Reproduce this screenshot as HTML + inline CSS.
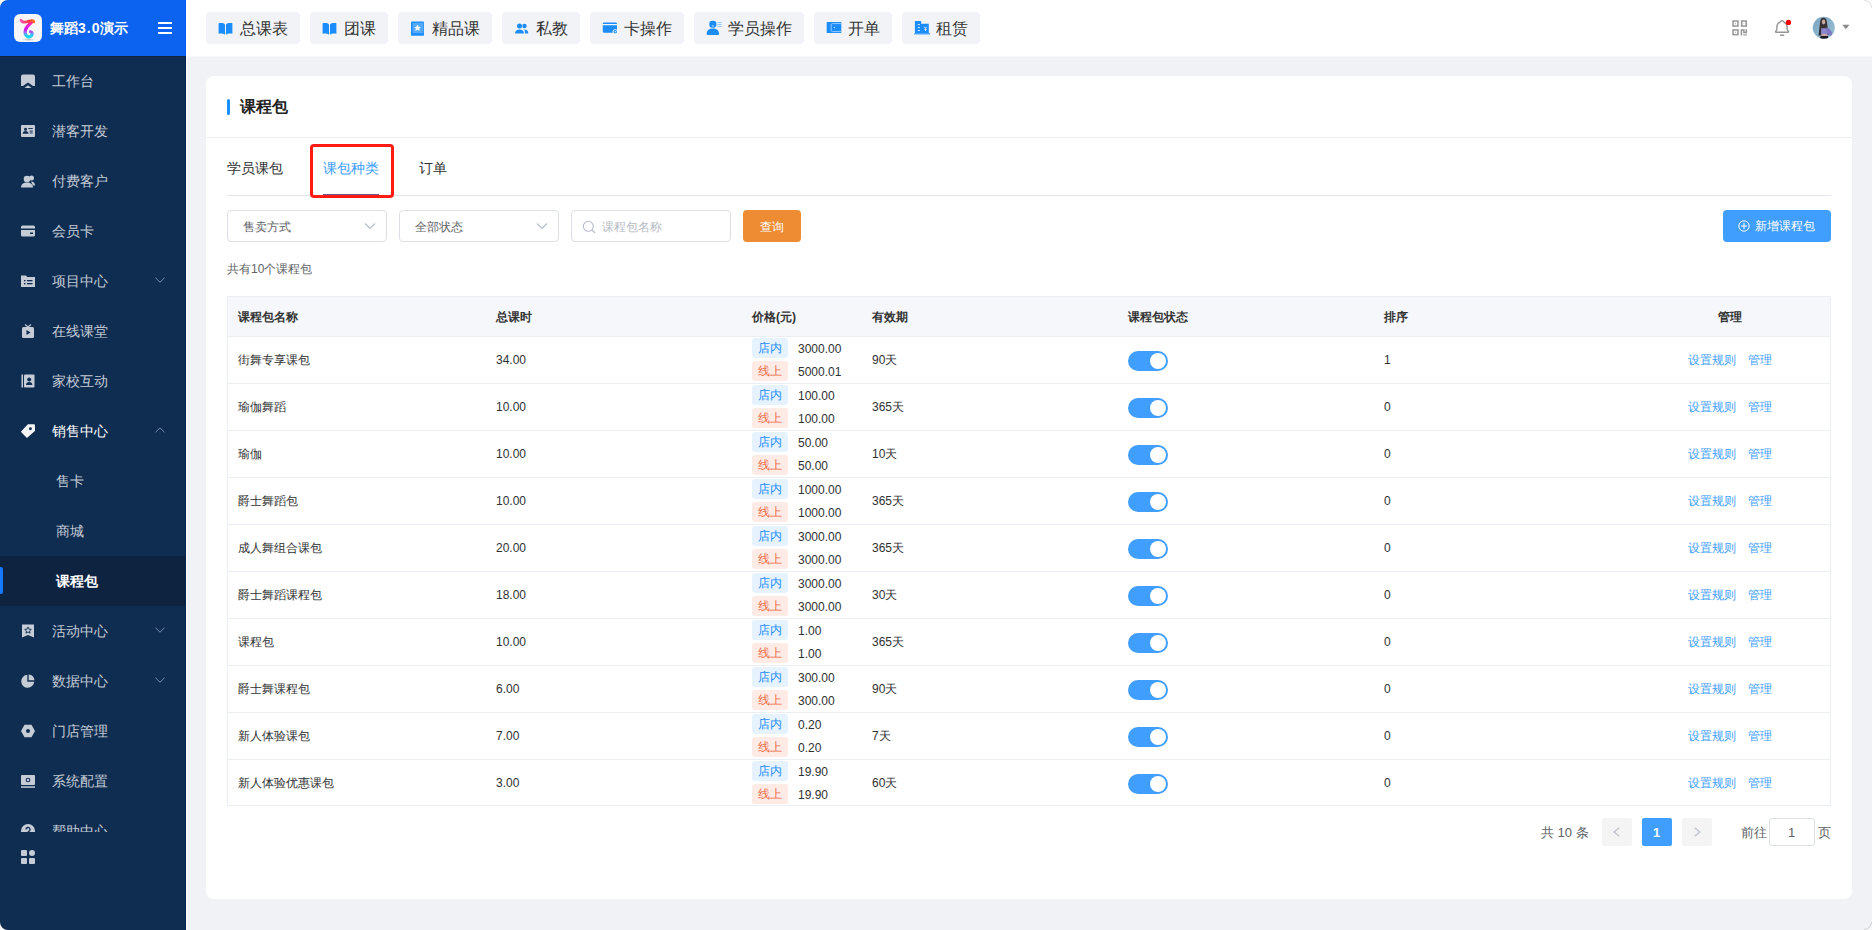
<!DOCTYPE html>
<html><head><meta charset="utf-8">
<style>
*{box-sizing:border-box;margin:0;padding:0}
html,body{width:1872px;height:930px;overflow:hidden;background:#fff;font-family:"Liberation Sans",sans-serif}
.app{position:absolute;left:0;top:0;width:1872px;height:930px;overflow:hidden;background:#f0f2f5}
.side{position:absolute;left:0;top:0;width:186px;height:930px;background:#0f2d51}
.sidehead{position:absolute;left:0;top:0;width:186px;height:56px;background:#0b63ef}
.logo{position:absolute;left:14px;top:14px;width:28px;height:28px;border-radius:6px;background:#f7f7f7}
.brand{position:absolute;left:50px;top:18px;font-size:14px;font-weight:bold;color:#fff;line-height:20px;white-space:nowrap}
.ham{position:absolute;left:158px;top:22px;width:14px;height:12px}
.ham i{position:absolute;left:0;width:14px;height:2px;background:#fff}
.menu{position:absolute;left:0;top:56px;width:186px;height:776px;overflow:hidden}
.mi{position:absolute;left:0;width:186px;height:50px}
.mi svg.ic{position:absolute;left:21px;top:18px;width:14px;height:14px}
.mi .t{position:absolute;left:52px;top:15px;font-size:14px;line-height:20px;color:#c5ccd6;white-space:nowrap}
.mi .t.sub{left:56px}
.mi svg.chev{position:absolute;left:155px;top:20.5px;width:10px;height:6px}
.mi.act{background:#0d2340}
.mi.act .t{color:#fff;font-weight:bold}
.mi.open .t{color:#fff}
.ind{position:absolute;left:0;top:11px;width:3px;height:27px;background:#1677ff;border-radius:0 2px 2px 0}
.grid{position:absolute;left:21px;top:850px;width:14px;height:14px}
.top{position:absolute;left:186px;top:0;width:1686px;height:56px;background:#fff}
.nb{position:absolute;top:12px;height:32px;background:#f2f3f7;border-radius:4px}
.nb svg{position:absolute;left:12px;top:9px;width:15px;height:15px;overflow:visible}
.nb span{position:absolute;left:34px;top:7px;font-size:16px;line-height:20px;color:#333;white-space:nowrap}
.card{position:absolute;left:206px;top:76px;width:1646px;height:823px;background:#fff;border-radius:8px}
.abs{position:absolute;white-space:nowrap}

.ttl{position:absolute;left:240px;top:96px;font-size:16px;font-weight:bold;line-height:22px;color:#222}
.bar{position:absolute;left:227px;top:99px;width:3px;height:16px;border-radius:2px;background:#1890ff}
.hline{position:absolute;height:1px;background:#ebeef5}
.tab{position:absolute;top:158px;font-size:14px;line-height:20px;color:#303133;white-space:nowrap}
.tab.on{color:#409eff}
.redbox{position:absolute;left:310px;top:144px;width:84px;height:54px;border:3px solid #ff1a12;border-radius:4px}
.sel{position:absolute;top:210px;height:32px;border:1px solid #dcdfe6;border-radius:4px;background:#fff}
.sel .tx{position:absolute;left:15px;top:8px;font-size:12px;line-height:16px;color:#606266;white-space:nowrap}
.sel svg{position:absolute;right:10px;top:9px;width:12px;height:12px}
.btn{position:absolute;top:210px;height:32px;border-radius:4px;color:#fff;font-size:12px;line-height:16px}
.cnt{position:absolute;left:227px;top:261px;font-size:12px;line-height:16px;color:#606266;white-space:nowrap}
.tbl{position:absolute;left:227px;top:296px;width:1604px;height:510px;border:1px solid #ebeef5;border-bottom:none}
.th{position:absolute;left:0;top:0;width:1602px;height:40px;background:#f5f7fa;border-bottom:1px solid #ebeef5}
.c{position:absolute;font-size:12px;line-height:16px;color:#303133;white-space:nowrap}
.th .c{font-weight:bold;top:12px;color:#333}
.tr{position:absolute;left:0;width:1602px;height:47px;border-bottom:1px solid #ebeef5}
.tr .c{top:15px}
.tg{position:absolute;left:524px;width:36px;height:20px;border-radius:3px;font-size:12px;line-height:20px;text-align:center}
.tg.a{top:1px;background:#e6f3ff;color:#1c8cff}
.tg.b{top:24px;background:#feebe6;color:#ee6a44}
.pr{position:absolute;left:570px;font-size:12px;line-height:16px;color:#303133}
.sw{position:absolute;left:900px;top:14px;width:40px;height:20px;border-radius:10px;background:#409eff}
.sw i{position:absolute;right:2px;top:2px;width:16px;height:16px;border-radius:50%;background:#fff}
.lk{position:absolute;top:15px;font-size:12px;line-height:16px;color:#409eff;white-space:nowrap}
.pg{position:absolute;top:818px;height:28px;width:30px;border-radius:2px;background:#f4f4f5}
.pgt{position:absolute;font-size:13px;line-height:16px;color:#606266;white-space:nowrap}
</style></head><body>
<div class="app">
<div class="side">
 <div class="sidehead">
  <div class="logo"><svg width="28" height="28" viewBox="0 0 28 28">
<defs>
<linearGradient id="lg1" x1="0" y1="0" x2="1" y2="0"><stop offset="0" stop-color="#ff4fb0"/><stop offset="0.6" stop-color="#ff3a3a"/><stop offset="1" stop-color="#ff6a20"/></linearGradient>
<linearGradient id="lg2" x1="0" y1="0" x2="0" y2="1"><stop offset="0" stop-color="#ff2a6a"/><stop offset="0.25" stop-color="#f020d0"/><stop offset="0.5" stop-color="#d010f0"/><stop offset="0.72" stop-color="#9a6af0"/><stop offset="0.88" stop-color="#30c8f0"/><stop offset="1" stop-color="#18d8f0"/></linearGradient>
<radialGradient id="sh" cx="0.5" cy="0.5" r="0.5"><stop offset="0" stop-color="#000" stop-opacity="0.22"/><stop offset="1" stop-color="#000" stop-opacity="0"/></radialGradient>
</defs>
<ellipse cx="14.5" cy="25.5" rx="7" ry="1.6" fill="url(#sh)"/><g transform="translate(14 14.5) scale(0.9) translate(-14 -14.5)">
<path d="M18.5 6.8 C 16 10.5, 10.8 12, 10.8 19 C 10.8 23.5, 15.5 25, 17.8 22.5 C 19.2 21, 18.8 18.5, 16.8 18.2" fill="none" stroke="url(#lg2)" stroke-width="3.6" stroke-linecap="round"/>
<path d="M6.2 5.2 C 7.5 8.2, 12 7.6, 15.5 6.2 C 18 5.3, 20.5 5.2, 20.5 7.2" fill="none" stroke="url(#lg1)" stroke-width="3" stroke-linecap="round"/></g>
</svg></div>
  <div class="brand">舞蹈<span style="letter-spacing:1px">3.0</span>演示</div>
  <div class="ham"><i style="top:0"></i><i style="top:5px"></i><i style="top:10px"></i></div>
 </div>
 <div class="menu">
<div class="mi" style="top:0px"><svg class="ic" viewBox="0 0 14 14"><path d="M2 0.5h10a2 2 0 0 1 2 2v9.5l-2 0L7 8.5 2 12 0 12V2.5a2 2 0 0 1 2-2z" fill="#c5ccd6"/><path d="M3.5 14L7 11.2 10.5 14z" fill="#c5ccd6"/></svg><div class="t">工作台</div></div>
<div class="mi" style="top:50px"><svg class="ic" viewBox="0 0 14 14"><rect x="0" y="1" width="14" height="12" rx="1" fill="#c5ccd6"/><circle cx="4.5" cy="5.2" r="1.5" fill="#0f2d51"/><path d="M1.7 9.8C1.7 7.8 3 6.9 4.55 6.9S7.4 7.8 7.4 9.8Z" fill="#0f2d51"/><rect x="7.2" y="4" width="4.6" height="0.9" fill="#0f2d51"/><rect x="8.6" y="6.2" width="3.1" height="3.5" fill="#5f7593"/></svg><div class="t">潜客开发</div></div>
<div class="mi" style="top:100px"><svg class="ic" viewBox="0 0 14 14"><circle cx="6" cy="5" r="3.3" fill="#c5ccd6"/><path d="M0 13.5c0-3.5 2.5-5 6-5s6 1.5 6 5z" fill="#c5ccd6"/><circle cx="10.5" cy="4" r="2.5" fill="#c5ccd6"/><path d="M10 7.5c2.5 0 4 1.2 4 4h-2z" fill="#c5ccd6"/></svg><div class="t">付费客户</div></div>
<div class="mi" style="top:150px"><svg class="ic" viewBox="0 0 14 14"><rect x="0" y="1.5" width="14" height="11" rx="1.5" fill="#c5ccd6"/><rect x="0" y="4.5" width="14" height="1.5" fill="#0f2d51"/><rect x="9" y="8.5" width="3" height="1.5" fill="#0f2d51"/></svg><div class="t">会员卡</div></div>
<div class="mi" style="top:200px"><svg class="ic" viewBox="0 0 14 14"><path d="M0 1.5h5l1.2 1.5H14v10H0z" fill="#c5ccd6"/><rect x="3" y="6" width="1.5" height="1.3" fill="#0f2d51"/><rect x="6" y="6" width="5.5" height="1.3" fill="#0f2d51"/><rect x="3" y="9" width="1.5" height="1.3" fill="#0f2d51"/><rect x="6" y="9" width="5.5" height="1.3" fill="#0f2d51"/></svg><div class="t">项目中心</div><svg class="chev" viewBox="0 0 10 6"><path d="M0.5 0.8 L5 5.2 L9.5 0.8" fill="none" stroke="#7890ad" stroke-width="1"/></svg></div>
<div class="mi" style="top:250px"><svg class="ic" viewBox="0 0 14 14"><path d="M4 0.5L7 3 10 0.5" stroke="#c5ccd6" stroke-width="1.2" fill="none"/><rect x="1" y="3" width="12" height="11" rx="1.5" fill="#c5ccd6"/><path d="M5.5 6v5l4-2.5z" fill="#0f2d51"/></svg><div class="t">在线课堂</div></div>
<div class="mi" style="top:300px"><svg class="ic" viewBox="0 0 14 14"><rect x="0.5" y="0.5" width="1.5" height="13" fill="#c5ccd6"/><rect x="3" y="0.5" width="10.5" height="13" rx="1" fill="#c5ccd6"/><circle cx="8.2" cy="5.5" r="2" fill="#0f2d51"/><path d="M5 11c0-2 1.4-3 3.2-3s3.2 1 3.2 3z" fill="#0f2d51"/></svg><div class="t">家校互动</div></div>
<div class="mi open" style="top:350px"><svg class="ic" viewBox="0 0 14 14"><path d="M7.2 1.1H13.1L13.3 6.3 6 13 0.9 7.8z" fill="#f4f4f4" stroke="#f4f4f4" stroke-width="1.6" stroke-linejoin="round"/><circle cx="9.4" cy="4.7" r="1.45" fill="#0f2d51"/></svg><div class="t">销售中心</div><svg class="chev" viewBox="0 0 10 6"><path d="M0.5 5.2 L5 0.8 L9.5 5.2" fill="none" stroke="#7890ad" stroke-width="1"/></svg></div>
<div class="mi" style="top:400px"><div class="t sub">售卡</div></div>
<div class="mi" style="top:450px"><div class="t sub">商城</div></div>
<div class="mi act" style="top:500px"><div class="ind"></div><div class="t sub">课程包</div></div>
<div class="mi" style="top:550px"><svg class="ic" viewBox="0 0 14 14"><path d="M1 0.5h12v13L7 11 1 13.5z" fill="#c5ccd6"/><path d="M7 3l1 2.2 2.3 0.2-1.8 1.5 0.6 2.3L7 8 4.9 9.2l0.6-2.3-1.8-1.5 2.3-0.2z" fill="none" stroke="#0f2d51" stroke-width="0.9"/></svg><div class="t">活动中心</div><svg class="chev" viewBox="0 0 10 6"><path d="M0.5 0.8 L5 5.2 L9.5 0.8" fill="none" stroke="#7890ad" stroke-width="1"/></svg></div>
<div class="mi" style="top:600px"><svg class="ic" viewBox="0 0 14 14"><path d="M6.3 0.8A6.5 6.5 0 1 0 13.2 7.7H6.3z" fill="#c5ccd6"/><path d="M7.7 0.5A6.5 6.5 0 0 1 13.5 6.3H7.7z" fill="#c5ccd6"/></svg><div class="t">数据中心</div><svg class="chev" viewBox="0 0 10 6"><path d="M0.5 0.8 L5 5.2 L9.5 0.8" fill="none" stroke="#7890ad" stroke-width="1"/></svg></div>
<div class="mi" style="top:650px"><svg class="ic" viewBox="0 0 14 14"><path d="M3.5 0.8h7L14 7l-3.5 6.2h-7L0 7z" fill="#c5ccd6"/><circle cx="7" cy="7" r="2" fill="#0f2d51"/></svg><div class="t">门店管理</div></div>
<div class="mi" style="top:700px"><svg class="ic" viewBox="0 0 14 14"><rect x="0" y="1" width="14" height="10" rx="1" fill="#c5ccd6"/><rect x="0" y="12.3" width="14" height="1.5" fill="#c5ccd6"/><circle cx="7" cy="6" r="1.8" fill="none" stroke="#0f2d51" stroke-width="1.1"/></svg><div class="t">系统配置</div></div>
<div class="mi" style="top:750px"><svg class="ic" viewBox="0 0 14 14"><circle cx="7" cy="7" r="7" fill="#c5ccd6"/><path d="M5 5.5a2 2 0 1 1 2.8 1.8c-0.6 0.3-0.8 0.6-0.8 1.3" stroke="#0f2d51" stroke-width="1.3" fill="none"/></svg><div class="t">帮助中心</div></div>
 </div>
 <svg class="grid" viewBox="0 0 14 14" fill="#c5ccd6"><rect x="0" y="0" width="6" height="6" rx="1"/><circle cx="11" cy="3" r="3"/><rect x="0" y="8" width="6" height="6" rx="1"/><rect x="8" y="8" width="6" height="6" rx="1"/></svg>
</div>
<div class="top">
<div class="nb" style="left:20px;width:94px"><svg viewBox="0 0 15 15"><path d="M7 3.4C5.5 1.9 3 1.6 0.6 2.3V12.8C3 12.2 5.5 12.5 7 13.8Z" fill="#1a8dfa"/><path d="M8 3.4C9.5 1.9 12 1.6 14.4 2.3V12.8C12 12.2 9.5 12.5 8 13.8Z" fill="#1a8dfa"/></svg><span>总课表</span></div>
<div class="nb" style="left:124px;width:78px"><svg viewBox="0 0 15 15"><path d="M7 3.4C5.5 1.9 3 1.6 0.6 2.3V12.8C3 12.2 5.5 12.5 7 13.8Z" fill="#1a8dfa"/><path d="M8 3.4C9.5 1.9 12 1.6 14.4 2.3V12.8C12 12.2 9.5 12.5 8 13.8Z" fill="#1a8dfa"/></svg><span>团课</span></div>
<div class="nb" style="left:212px;width:94px"><svg viewBox="0 0 15 15"><rect x="1" y="0.5" width="13" height="14" rx="1" fill="#1a8dfa"/><rect x="2.5" y="1.8" width="11" height="10.5" fill="#fff" opacity="0.25"/><path d="M7.5 3.5l1.1 2.2 2.4 0.3-1.8 1.6 0.5 2.4-2.2-1.2-2.2 1.2 0.5-2.4-1.8-1.6 2.4-0.3z" fill="#fff"/><rect x="1" y="12.5" width="13" height="2" fill="#1a8dfa"/></svg><span>精品课</span></div>
<div class="nb" style="left:316px;width:78px"><svg viewBox="0 0 15 15"><circle cx="5.5" cy="5" r="2.5" fill="#1a8dfa"/><path d="M1 12.5c0-2.8 2-4 4.5-4s4.5 1.2 4.5 4z" fill="#1a8dfa"/><circle cx="10.5" cy="5" r="2.2" fill="#1a8dfa"/><path d="M10.5 8.5c2.2 0 3.8 1.2 3.8 4H11z" fill="#1a8dfa"/></svg><span>私教</span></div>
<div class="nb" style="left:404px;width:94px"><svg viewBox="0 0 15 15"><path d="M0.8 3.1V2.8A1.3 1.3 0 0 1 2.1 1.6H13.7A1.3 1.3 0 0 1 15 2.8V3.1Z" fill="#1a8dfa"/><path d="M0.8 4.2H15V10.4A1.3 1.3 0 0 1 13.7 11.7H2.1A1.3 1.3 0 0 1 0.8 10.4Z" fill="#1a8dfa"/><circle cx="13.2" cy="10.8" r="2.6" fill="#fff"/><circle cx="13.2" cy="10.8" r="1.8" fill="#1a8dfa"/><circle cx="13.2" cy="10.8" r="0.7" fill="#fff"/></svg><span>卡操作</span></div>
<div class="nb" style="left:508px;width:110px"><svg viewBox="0 0 15 15"><rect x="3.3" y="-0.3" width="7.1" height="7.1" rx="3" fill="#1a8dfa"/><rect x="5.9" y="4.6" width="1.9" height="0.8" fill="#fff"/><path d="M0.7 12.6C0.7 9.3 3.3 7.4 6.85 7.4S13 9.3 13 12.6V13A1 1 0 0 1 12 14H1.7A1 1 0 0 1 0.7 13Z" fill="#1a8dfa"/><path d="M11.3 1.5h4.3M11.3 3.5h4.3M11.3 5.5h4.3" stroke="#8cc6ff" stroke-width="0.9"/></svg><span>学员操作</span></div>
<div class="nb" style="left:628px;width:78px"><svg viewBox="0 0 15 15"><rect x="0.7" y="0.9" width="14.6" height="11.2" rx="0.6" fill="#1a8dfa"/><path d="M15.3 2.6H6.4A1.2 1.2 0 0 0 5.2 3.8V9.4A1.2 1.2 0 0 0 6.4 10.6H15.3" fill="none" stroke="#a6d3ff" stroke-width="0.9"/><circle cx="8.3" cy="6.6" r="0.55" fill="#fff"/></svg><span>开单</span></div>
<div class="nb" style="left:716px;width:78px"><svg viewBox="0 0 15 15"><rect x="0.9" y="0.1" width="6.3" height="12" rx="0.5" fill="#1a8dfa"/><rect x="7" y="2.7" width="7.8" height="9.3" rx="0.4" fill="#1a8dfa"/><rect x="0.2" y="12" width="15.8" height="1.6" rx="0.3" fill="#4aa6ff"/><path d="M3.8 3.6h2M3.8 6.6h2M3.8 9.6h2" stroke="#fff" stroke-width="0.9"/><path d="M10.3 5.8l1.2 1.6 1.2-1.6M11.5 7.4v2.6M10.4 8.4h2.2" stroke="#fff" stroke-width="0.8" fill="none"/></svg><span>租赁</span></div>
</div>
<div class="abs" style="left:185px;top:0;width:1px;height:56px;background:#0057f5"></div><div class="abs" style="left:185px;top:56px;width:1px;height:874px;background:#00214a"></div><div class="abs" style="left:186px;top:56px;width:1px;height:874px;background:#fff"></div><div class="abs" style="left:187px;top:56px;width:1685px;height:1px;background:#f6f7f9"></div><div class="abs" style="left:0;top:56px;width:185px;height:1px;background:#0f2540"></div>

<svg class="abs" style="left:1728px;top:16px;width:24px;height:24px" viewBox="0 0 24 24" fill="none" stroke="#959595" stroke-width="1.5"><rect x="5.05" y="5.05" width="4.9" height="5"/><rect x="13.65" y="5.05" width="4.6" height="5"/><rect x="5.05" y="13.95" width="4.9" height="4.7"/><path d="M13.4 19.4V13.95H15.9V16.6H18.3V13.2"/><path d="M15.2 18.9H19" stroke-width="1.1"/><rect x="7.1" y="7" width="0.9" height="1.3" fill="#aaa" stroke="none"/><rect x="15.4" y="7.2" width="1.1" height="0.9" fill="#c5c5c5" stroke="none"/><rect x="7.1" y="15.7" width="0.9" height="1.2" fill="#aaa" stroke="none"/></svg>
<svg class="abs" style="left:1770px;top:14px;width:30px;height:26px" viewBox="0 0 30 26" fill="none" stroke="#969696" stroke-width="1.4"><path d="M12 6.6C10.9 6.6 10.6 7.6 10.1 8.1C8.1 9.1 6.9 10.6 6.9 12.6V15.5C6.9 16.5 5.5 17 5.5 17.8C5.5 18.2 5.9 18.3 6.6 18.3H17.5C18.2 18.3 18.6 18.2 18.6 17.8C18.6 17 17.1 16.5 17.1 15.5V12.6C17.1 10.6 16 9.1 14 8.1C13.5 7.6 13.2 6.6 12 6.6Z"/><path d="M10.5 21.3H13.7" stroke-linecap="round"/><circle cx="18.45" cy="8.4" r="2.6" fill="#ff0000" stroke="none"/></svg>
<svg class="abs" style="left:1812px;top:16px;width:24px;height:24px" viewBox="0 0 24 24"><defs><clipPath id="av"><circle cx="11.8" cy="11.8" r="11"/></clipPath><linearGradient id="avbg" x1="0" y1="0" x2="1" y2="1"><stop offset="0" stop-color="#78a4c0"/><stop offset="1" stop-color="#9cc0d6"/></linearGradient></defs>
<g clip-path="url(#av)"><rect width="24" height="24" fill="url(#avbg)"/>
<path d="M8.5 4C9.5 1 13.5 1 14.5 4C15.5 8 15.5 13 17 19L6.5 19.5C7.5 13 7.5 8 8.5 4Z" fill="#3b3234"/>
<ellipse cx="11.6" cy="6" rx="1.7" ry="2.4" fill="#c9a8a2"/>
<path d="M9.2 12.2h5.6l0.6 5.8H9z" fill="#8e88cf"/><path d="M14.3 11.2c3 0.5 5 3 6.2 6.8l-2.2 1.8-1.6-1.2-1.6 1.2z" fill="#7d77c4"/><path d="M8.8 12.5c-1.2 1-1.6 3-1.5 6l1.8 0.5z" fill="#2f2a3a"/>
<path d="M9.5 18h5.5l0.2 2H9.3z" fill="#caa7a2"/><path d="M8.5 20h7.5l0.5 5h-8.5z" fill="#1b1b22"/></g></svg>
<svg class="abs" style="left:1842px;top:24px;width:8px;height:6px" viewBox="0 0 8 6"><path d="M0.3 0.8h7.2L3.9 5.2z" fill="#8a8a8a"/></svg>


<div class="card"></div>
<div class="bar"></div>
<div class="ttl">课程包</div>
<div class="hline" style="left:206px;top:137px;width:1646px"></div>
<div class="tab" style="left:227px">学员课包</div>
<div class="tab on" style="left:323px">课包种类</div>
<div class="tab" style="left:419px">订单</div>
<div class="hline" style="left:227px;top:195px;width:1604px;background:#e4e7ed"></div>
<div class="hline" style="left:323px;top:194px;width:56px;height:1px;background:#6c5a9c"></div>
<div class="redbox"></div>
<div class="sel" style="left:227px;width:160px"><div class="tx">售卖方式</div><svg viewBox="0 0 12 12"><path d="M1 3.5L6 8.5 11 3.5" fill="none" stroke="#b4bccc" stroke-width="1.2"/></svg></div>
<div class="sel" style="left:399px;width:160px"><div class="tx">全部状态</div><svg viewBox="0 0 12 12"><path d="M1 3.5L6 8.5 11 3.5" fill="none" stroke="#b4bccc" stroke-width="1.2"/></svg></div>
<div class="sel" style="left:571px;width:160px"><svg style="left:10px;top:9px;width:14px;height:14px" viewBox="0 0 14 14"><circle cx="6.3" cy="6.3" r="5" fill="none" stroke="#b4bccc" stroke-width="1.1"/><path d="M10 10l3 3" stroke="#b4bccc" stroke-width="1.1"/></svg><div class="tx" style="left:30px;color:#b8bcc4">课程包名称</div></div>
<div class="btn" style="left:743px;width:58px;background:#ee8c34"><span class="abs" style="left:17px;top:9px">查询</span></div>
<div class="btn" style="left:1723px;width:108px;background:#409eff"><svg class="abs" style="left:15px;top:10px;width:12px;height:12px" viewBox="0 0 12 12"><circle cx="6" cy="6" r="5.2" fill="none" stroke="#fff" stroke-width="1"/><path d="M6 3v6M3 6h6" stroke="#fff" stroke-width="1"/></svg><span class="abs" style="left:32px;top:8px">新增课程包</span></div>
<div class="cnt">共有10个课程包</div>
<div class="tbl">
<div class="th"><div class="c" style="left:10px">课程包名称</div><div class="c" style="left:268px">总课时</div><div class="c" style="left:524px">价格(元)</div><div class="c" style="left:644px">有效期</div><div class="c" style="left:900px">课程包状态</div><div class="c" style="left:1156px">排序</div><div class="c" style="left:1490px">管理</div></div>
<div class="tr" style="top:40px;height:47px"><div class="c" style="left:10px">街舞专享课包</div><div class="c" style="left:268px">34.00</div><div class="tg a">店内</div><div class="tg b">线上</div><div class="pr" style="top:4px">3000.00</div><div class="pr" style="top:27px">5000.01</div><div class="c" style="left:644px">90天</div><div class="sw"><i></i></div><div class="c" style="left:1156px">1</div><div class="lk" style="left:1460px">设置规则</div><div class="lk" style="left:1520px">管理</div></div>
<div class="tr" style="top:87px;height:47px"><div class="c" style="left:10px">瑜伽舞蹈</div><div class="c" style="left:268px">10.00</div><div class="tg a">店内</div><div class="tg b">线上</div><div class="pr" style="top:4px">100.00</div><div class="pr" style="top:27px">100.00</div><div class="c" style="left:644px">365天</div><div class="sw"><i></i></div><div class="c" style="left:1156px">0</div><div class="lk" style="left:1460px">设置规则</div><div class="lk" style="left:1520px">管理</div></div>
<div class="tr" style="top:134px;height:47px"><div class="c" style="left:10px">瑜伽</div><div class="c" style="left:268px">10.00</div><div class="tg a">店内</div><div class="tg b">线上</div><div class="pr" style="top:4px">50.00</div><div class="pr" style="top:27px">50.00</div><div class="c" style="left:644px">10天</div><div class="sw"><i></i></div><div class="c" style="left:1156px">0</div><div class="lk" style="left:1460px">设置规则</div><div class="lk" style="left:1520px">管理</div></div>
<div class="tr" style="top:181px;height:47px"><div class="c" style="left:10px">爵士舞蹈包</div><div class="c" style="left:268px">10.00</div><div class="tg a">店内</div><div class="tg b">线上</div><div class="pr" style="top:4px">1000.00</div><div class="pr" style="top:27px">1000.00</div><div class="c" style="left:644px">365天</div><div class="sw"><i></i></div><div class="c" style="left:1156px">0</div><div class="lk" style="left:1460px">设置规则</div><div class="lk" style="left:1520px">管理</div></div>
<div class="tr" style="top:228px;height:47px"><div class="c" style="left:10px">成人舞组合课包</div><div class="c" style="left:268px">20.00</div><div class="tg a">店内</div><div class="tg b">线上</div><div class="pr" style="top:4px">3000.00</div><div class="pr" style="top:27px">3000.00</div><div class="c" style="left:644px">365天</div><div class="sw"><i></i></div><div class="c" style="left:1156px">0</div><div class="lk" style="left:1460px">设置规则</div><div class="lk" style="left:1520px">管理</div></div>
<div class="tr" style="top:275px;height:47px"><div class="c" style="left:10px">爵士舞蹈课程包</div><div class="c" style="left:268px">18.00</div><div class="tg a">店内</div><div class="tg b">线上</div><div class="pr" style="top:4px">3000.00</div><div class="pr" style="top:27px">3000.00</div><div class="c" style="left:644px">30天</div><div class="sw"><i></i></div><div class="c" style="left:1156px">0</div><div class="lk" style="left:1460px">设置规则</div><div class="lk" style="left:1520px">管理</div></div>
<div class="tr" style="top:322px;height:47px"><div class="c" style="left:10px">课程包</div><div class="c" style="left:268px">10.00</div><div class="tg a">店内</div><div class="tg b">线上</div><div class="pr" style="top:4px">1.00</div><div class="pr" style="top:27px">1.00</div><div class="c" style="left:644px">365天</div><div class="sw"><i></i></div><div class="c" style="left:1156px">0</div><div class="lk" style="left:1460px">设置规则</div><div class="lk" style="left:1520px">管理</div></div>
<div class="tr" style="top:369px;height:47px"><div class="c" style="left:10px">爵士舞课程包</div><div class="c" style="left:268px">6.00</div><div class="tg a">店内</div><div class="tg b">线上</div><div class="pr" style="top:4px">300.00</div><div class="pr" style="top:27px">300.00</div><div class="c" style="left:644px">90天</div><div class="sw"><i></i></div><div class="c" style="left:1156px">0</div><div class="lk" style="left:1460px">设置规则</div><div class="lk" style="left:1520px">管理</div></div>
<div class="tr" style="top:416px;height:47px"><div class="c" style="left:10px">新人体验课包</div><div class="c" style="left:268px">7.00</div><div class="tg a">店内</div><div class="tg b">线上</div><div class="pr" style="top:4px">0.20</div><div class="pr" style="top:27px">0.20</div><div class="c" style="left:644px">7天</div><div class="sw"><i></i></div><div class="c" style="left:1156px">0</div><div class="lk" style="left:1460px">设置规则</div><div class="lk" style="left:1520px">管理</div></div>
<div class="tr" style="top:463px;height:46px"><div class="c" style="left:10px">新人体验优惠课包</div><div class="c" style="left:268px">3.00</div><div class="tg a">店内</div><div class="tg b">线上</div><div class="pr" style="top:4px">19.90</div><div class="pr" style="top:27px">19.90</div><div class="c" style="left:644px">60天</div><div class="sw"><i></i></div><div class="c" style="left:1156px">0</div><div class="lk" style="left:1460px">设置规则</div><div class="lk" style="left:1520px">管理</div></div>
</div>
<div class="pgt" style="left:1541px;top:825px">共 10 条</div>
<div class="pg" style="left:1602px"><svg class="abs" style="left:10px;top:9px;width:10px;height:10px" viewBox="0 0 10 10"><path d="M7.3 0.6L2 5l5.3 4.4" fill="none" stroke="#b8bcc6" stroke-width="1.2"/></svg></div>
<div class="pg" style="left:1642px;background:#409eff"><span class="abs" style="left:11px;top:7px;font-size:13px;line-height:16px;font-weight:bold;color:#fff">1</span></div>
<div class="pg" style="left:1682px"><svg class="abs" style="left:10px;top:9px;width:10px;height:10px" viewBox="0 0 10 10"><path d="M2.6 0.6L7.8 5 2.6 9.4" fill="none" stroke="#b8bcc6" stroke-width="1.2"/></svg></div>
<div class="pgt" style="left:1741px;top:825px">前往</div>
<div class="abs" style="left:1769px;top:818px;width:46px;height:28px;border:1px solid #dcdfe6;border-radius:3px;background:#fff"><span class="abs" style="left:18px;top:6px;font-size:13px;line-height:16px;color:#606266">1</span></div>
<div class="pgt" style="left:1818px;top:825px">页</div>

</div>

<svg class="abs" style="left:0;top:0;width:10px;height:10px" viewBox="0 0 10 10"><path d="M0 0H8A8 8 0 0 0 0 8Z" fill="#f7f7f5"/><path d="M8 0.5A7.5 7.5 0 0 0 0.5 8" fill="none" stroke="rgba(0,0,0,0.08)" stroke-width="1"/></svg>
<svg class="abs" style="left:1862px;top:0;width:10px;height:10px" viewBox="0 0 10 10"><path d="M10 0H2A8 8 0 0 1 10 8Z" fill="#fafafa"/><path d="M2 0.5A7.5 7.5 0 0 1 9.5 8" fill="none" stroke="rgba(0,0,0,0.12)" stroke-width="1"/></svg>
<svg class="abs" style="left:0;top:920px;width:10px;height:10px" viewBox="0 0 10 10"><path d="M0 10H8A8 8 0 0 1 0 2Z" fill="#f7f7f5"/><path d="M8 9.5A7.5 7.5 0 0 1 0.5 2" fill="none" stroke="rgba(0,0,0,0.1)" stroke-width="1"/></svg>
<svg class="abs" style="left:1862px;top:920px;width:10px;height:10px" viewBox="0 0 10 10"><path d="M10 10H2A8 8 0 0 0 10 2Z" fill="#f7f7f7"/><path d="M2 9.5A7.5 7.5 0 0 0 9.5 2" fill="none" stroke="rgba(0,0,0,0.15)" stroke-width="1"/></svg>

</body></html>
